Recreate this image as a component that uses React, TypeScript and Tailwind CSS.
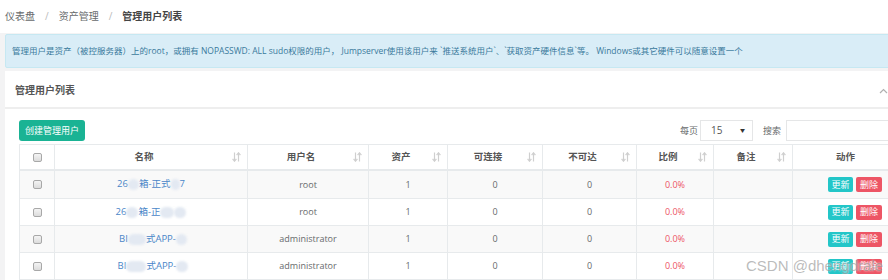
import React from "react";

const SortIcon = () => (
  <svg width="9" height="10" viewBox="0 0 9 10" className="absolute right-[6px] top-1/2 -translate-y-1/2" fill="none" stroke="#cfcfcf" strokeWidth="1.2">
    <path d="M2.5 0.5V9" />
    <path d="M0.6 6.8L2.5 9.2L4.4 6.8" />
    <path d="M6.5 1V9.5" />
    <path d="M4.6 3.2L6.5 0.8L8.4 3.2" />
  </svg>
);

const Checkbox = () => (
  <span className="inline-block w-[9px] h-[9px] rounded-[2px] border border-[#a8a8a8] bg-gradient-to-b from-[#f4f4f4] to-[#dcdcdc]" />
);

const Blob = ({ w }: { w: number }) => (
  <span
    className="inline-block h-[11px] rounded-full bg-[#e3e9f2] align-middle blur-[1px]"
    style={{ width: w }}
  />
);

const cols = "grid grid-cols-[35px_193px_121px_79px_95px_94px_77px_79px_106px]";

const headers: { t: string; sort: boolean }[] = [
  { t: "名称", sort: true },
  { t: "用户名", sort: true },
  { t: "资产", sort: true },
  { t: "可连接", sort: true },
  { t: "不可达", sort: true },
  { t: "比例", sort: true },
  { t: "备注", sort: true },
  { t: "动作", sort: false },
];

const names: React.ReactNode[] = [
  <span className="inline-flex items-center">
    26<Blob w={11} />箱-正式<Blob w={9} />7
  </span>,
  <span className="inline-flex items-center">
    26<Blob w={12} />箱-正<Blob w={14} /><Blob w={12} />
  </span>,
  <span className="inline-flex items-center pl-[4px]">
    BI<Blob w={18} />式APP-<Blob w={11} />
  </span>,
  <span className="inline-flex items-center pl-[4px]">
    BI<Blob w={20} />式APP-<Blob w={12} />
  </span>,
];

const users = ["root", "root", "administrator", "administrator"];

export default function App() {
  return (
    <div className="relative w-[888px] h-[280px] overflow-hidden bg-[#f3f3f4] font-['Open_Sans','Noto_Sans_CJK_SC',sans-serif] text-[#676a6c]">
      {/* breadcrumb */}
      <div className="h-[33px] bg-white flex items-center pl-[5px] text-[10px]">
        <span>仪表盘</span>
        <span className="mx-[10px] text-[#bbb]">/</span>
        <span>资产管理</span>
        <span className="mx-[10px] text-[#bbb]">/</span>
        <span className="font-bold text-[#444]">管理用户列表</span>
      </div>

      <div className="pl-[5px] w-[912px]">
        {/* alert */}
        <div className="mt-px h-[34px] border border-[#c6e8f2] bg-[#d9edf7] text-[#3a7a9c] rounded-[2px] flex items-center pl-[6px] text-[8.5px] whitespace-nowrap">
          管理用户是资产（被控服务器）上的root，或拥有 NOPASSWD: ALL sudo权限的用户， Jumpserver使用该用户来 `推送系统用户`、`获取资产硬件信息`等。 Windows或其它硬件可以随意设置一个
        </div>

        {/* panel */}
        <div className="mt-[3px] bg-white">
          <div className="h-[38px] flex items-center justify-between pl-[10px] pr-[24px] pt-[3px] border-b-2 border-[#eeeeee]">
            <span className="text-[10px] font-semibold text-[#555]">管理用户列表</span>
            <svg width="9" height="6" viewBox="0 0 9 6" fill="none" stroke="#b0b0b0" strokeWidth="1.2">
              <path d="M1 5L4.5 1.5L8 5" />
            </svg>
          </div>

          <div className="pt-[11px] px-[14px]">
            {/* toolbar */}
            <div className="flex items-center justify-between h-[21px]">
              <button className="w-[66px] h-[21px] rounded-[3px] bg-[#1ab394] text-white text-[9px] flex items-center justify-center">
                创建管理用户
              </button>
              <div className="flex items-center text-[9px]">
                <span>每页</span>
                <div className="ml-[2px] w-[53px] h-[21px] border border-[#e5e6e7] flex items-center justify-between pl-[10px] pr-[7px] text-[10px] text-[#555]">
                  <span>15</span>
                  <span className="text-[5px] text-[#333]">▼</span>
                </div>
                <span className="ml-[10px]">搜索</span>
                <div className="ml-[5px] w-[112px] h-[21px] border border-[#e5e6e7]" />
              </div>
            </div>

            {/* table */}
            <div className="mt-[3px] text-[9px]">
              <div className={`${cols} h-[27px]`}>
                <div className="border-t border-l border-b-2 border-[#e7eaec] flex items-center justify-center">
                  <Checkbox />
                </div>
                {headers.map((h) => (
                  <div
                    key={h.t}
                    className={`relative border-t border-l border-b-2 border-[#e7eaec] flex items-center justify-center font-bold text-[9.5px] text-[#555] ${h.sort ? "pr-[14px]" : ""}`}
                  >
                    {h.t}
                    {h.sort && <SortIcon />}
                  </div>
                ))}
              </div>
              {users.map((u, i) => (
                <div
                  key={i}
                  className={`${cols} ${i === 0 ? "h-[28px]" : "h-[27px]"} ${i % 2 === 0 ? "bg-[#f9f9f9]" : "bg-white"}`}
                >
                  <div className="border-l border-b border-[#e7eaec] flex items-center justify-center">
                    <Checkbox />
                  </div>
                  <div className="border-l border-b border-[#e7eaec] flex items-center justify-center text-[#4a86c8] text-[9.5px]">
                    {names[i]}
                  </div>
                  <div className="border-l border-b border-[#e7eaec] flex items-center justify-center text-[#676a6c]">{u}</div>
                  <div className="border-l border-b border-[#e7eaec] flex items-center justify-center text-[#676a6c]">1</div>
                  <div className="border-l border-b border-[#e7eaec] flex items-center justify-center text-[#676a6c]">0</div>
                  <div className="border-l border-b border-[#e7eaec] flex items-center justify-center text-[#676a6c]">0</div>
                  <div className="border-l border-b border-[#e7eaec] flex items-center justify-center text-[#ed5565]">0.0%</div>
                  <div className="border-l border-b border-[#e7eaec]" />
                  <div className="border-l border-b border-[#e7eaec] flex items-center justify-end pr-[16px] gap-[3px]">
                    <span className="w-[25px] h-[15px] rounded-[2px] bg-[#23c6c8] text-white text-[9px] flex items-center justify-center">更新</span>
                    <span className="w-[26px] h-[15px] rounded-[2px] bg-[#ed5565] text-white text-[9px] flex items-center justify-center">删除</span>
                  </div>
                </div>
              ))}
            </div>
          </div>
        </div>
      </div>

      {/* watermark */}
      <div className="absolute right-[5px] bottom-[3px] text-[15px] font-['Liberation_Sans',sans-serif] text-[rgba(120,120,120,0.5)] [text-shadow:0_0_2px_rgba(255,255,255,0.9)] whitespace-nowrap">
        CSDN @dhengdrale
      </div>
    </div>
  );
}
